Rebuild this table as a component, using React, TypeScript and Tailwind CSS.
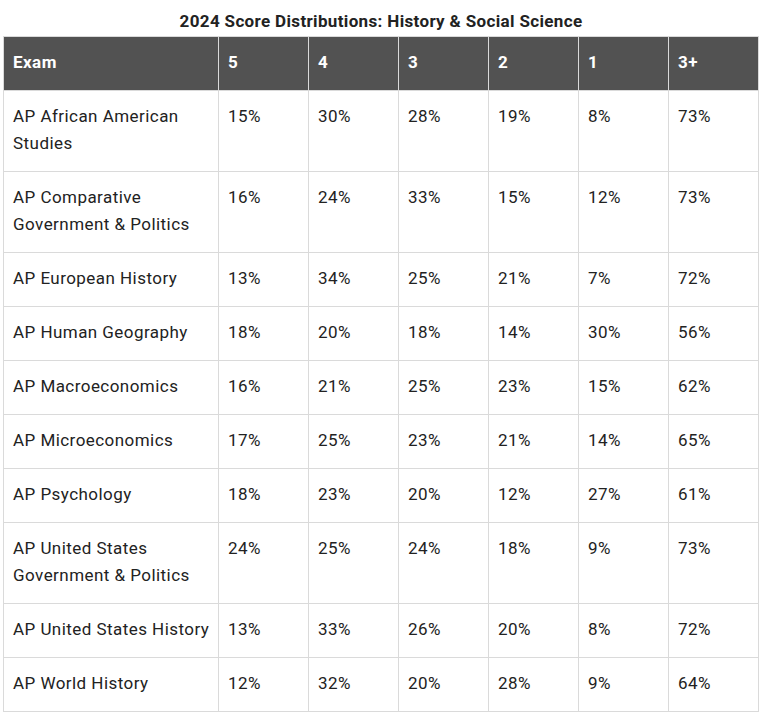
const rows: [string, string[]][] = [
  ["AP African American Studies", ["15%", "30%", "28%", "19%", "8%", "73%"]],
  ["AP Comparative Government & Politics", ["16%", "24%", "33%", "15%", "12%", "73%"]],
  ["AP European History", ["13%", "34%", "25%", "21%", "7%", "72%"]],
  ["AP Human Geography", ["18%", "20%", "18%", "14%", "30%", "56%"]],
  ["AP Macroeconomics", ["16%", "21%", "25%", "23%", "15%", "62%"]],
  ["AP Microeconomics", ["17%", "25%", "23%", "21%", "14%", "65%"]],
  ["AP Psychology", ["18%", "23%", "20%", "12%", "27%", "61%"]],
  ["AP United States Government & Politics", ["24%", "25%", "24%", "18%", "9%", "73%"]],
  ["AP United States History", ["13%", "33%", "26%", "20%", "8%", "72%"]],
  ["AP World History", ["12%", "32%", "20%", "28%", "9%", "64%"]],
];

const heads = ["5", "4", "3", "2", "1", "3+"];

const cell = "border border-[#dadada] pl-[9px] pr-[6px] pt-[12px] pb-[14px] text-left align-top";

export default function App() {
  return (
    <div className="bg-white px-[3px] pt-[11px] font-['Roboto',sans-serif] text-[#222]">
      <h2 className="mb-[5px] text-center text-[17px] font-bold leading-[20px] tracking-[0.35px] text-[#222]">
        2024 Score Distributions: History &amp; Social Science
      </h2>
      <table className="w-[756px] table-fixed border-collapse text-[17px] leading-[27px] tracking-[0.45px]">
        <colgroup>
          <col className="w-[215px]" />
          {heads.map((h) => (
            <col key={h} className="w-[90px]" />
          ))}
        </colgroup>
        <thead>
          <tr className="bg-[#525252] text-white">
            <th className={`${cell} font-bold`}>Exam</th>
            {heads.map((h) => (
              <th key={h} className={`${cell} font-bold`}>
                {h}
              </th>
            ))}
          </tr>
        </thead>
        <tbody>
          {rows.map(([name, vals]) => (
            <tr key={name}>
              <td className={cell}>{name}</td>
              {vals.map((v, i) => (
                <td key={i} className={cell}>
                  {v}
                </td>
              ))}
            </tr>
          ))}
        </tbody>
      </table>
    </div>
  );
}
